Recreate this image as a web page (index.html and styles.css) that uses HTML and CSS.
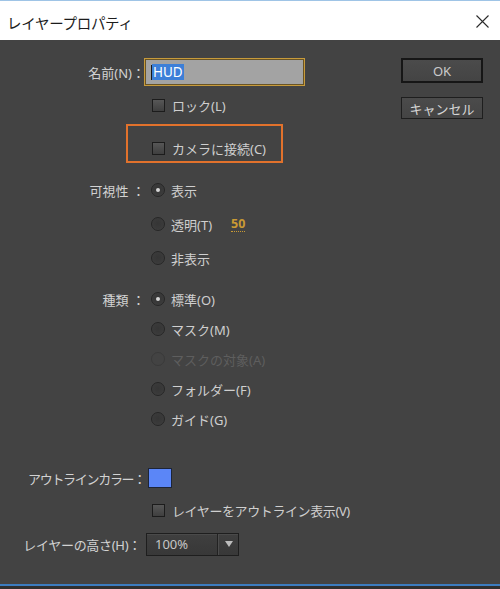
FILE: index.html
```html
<!DOCTYPE html>
<html lang="ja">
<head>
<meta charset="utf-8">
<title>レイヤープロパティ</title>
<link rel="stylesheet" href="styles.css">
</head>
<body>
<div class="window">
  <header class="titlebar">
    <span class="title">レイヤープロパティ</span>
    <svg class="close" width="13" height="13" viewBox="0 0 13 13"><path d="M0.5 0.5L12.5 12.5M12.5 0.5L0.5 12.5" stroke="#2b2b2b" stroke-width="1.1" fill="none"/></svg>
  </header>
  <main class="dialog">
    <div class="form">
      <div class="row row-name">
        <span class="label">名前(N)：</span>
        <div class="field"><span class="caret"></span><span class="sel">HUD</span></div>
      </div>
      <div class="row row-lock indent">
        <span class="check"></span><span class="text ctext">ロック(L)</span>
      </div>
      <div class="highlight">
        <div class="row row-cam"><span class="check"></span><span class="text ctext">カメラに接続(C)</span></div>
      </div>
      <div class="group group-vis">
        <div class="row vis">
          <span class="label">可視性 ：</span>
          <span class="radio on"></span><span class="text">表示</span>
        </div>
        <div class="row vis indent">
          <span class="radio"></span><span class="text">透明(T)</span><span class="num">50</span>
        </div>
        <div class="row vis indent">
          <span class="radio"></span><span class="text">非表示</span>
        </div>
      </div>
      <div class="group group-type">
        <div class="row type">
          <span class="label">種類 ：</span>
          <span class="radio on"></span><span class="text">標準(O)</span>
        </div>
        <div class="row type indent">
          <span class="radio"></span><span class="text">マスク(M)</span>
        </div>
        <div class="row type indent disabled">
          <span class="radio"></span><span class="text">マスクの対象(A)</span>
        </div>
        <div class="row type indent">
          <span class="radio"></span><span class="text">フォルダー(F)</span>
        </div>
        <div class="row type indent">
          <span class="radio"></span><span class="text">ガイド(G)</span>
        </div>
      </div>
      <div class="row row-color">
        <span class="label narrow">アウトラインカラー：</span>
        <span class="swatch"></span>
      </div>
      <div class="row row-outline indent">
        <span class="check"></span><span class="text ctext tight">レイヤーをアウトライン表示(V)</span>
      </div>
      <div class="row row-height">
        <span class="label semi">レイヤーの高さ(H)：</span>
        <div class="dropdown">
          <span class="dd-value">100%</span>
          <span class="dd-arrow"><svg width="8" height="6" viewBox="0 0 8 6"><path d="M0 0H8L4 6Z" fill="#bdbdbd"/></svg></span>
        </div>
      </div>
    </div>
    <div class="buttons">
      <button class="btn btn-ok">OK</button>
      <button class="btn btn-cancel">キャンセル</button>
    </div>
  </main>
</div>
</body>
</html>
```

FILE: styles.css
```css
* { box-sizing: border-box; }
html { background: #2f2f2f; }
body {
  margin: 0;
  font-family: "Noto Sans", "Noto Sans CJK JP", sans-serif;
  font-size: 13px;
  color: #cfcfcf;
}
.window { width: 500px; }

.titlebar {
  height: 40px;
  background: #ffffff;
  border-top: 1px solid #9fc4e6;
  display: flex;
  align-items: center;
  justify-content: space-between;
  padding: 3px 11px 0 7px;
}
.title {
  font-family: "Noto Sans CJK JP", sans-serif;
  font-size: 14.5px;
  color: #1c1c1c;
  letter-spacing: -0.3px;
}
.close { margin-top: -2px; }

.dialog {
  height: 546px;
  background: #434343;
  border-bottom: 2px solid #3c7cbf;
  display: flex;
}
.form { width: 401px; padding-top: 18px; }

.row { display: flex; align-items: center; height: 24px; }
.indent { padding-left: 145px; }
.label {
  width: 145px;
  flex: none;
  text-align: right;
  color: #d2d2d2;
  white-space: nowrap;
}
.label.narrow { letter-spacing: -1.3px; }
.label.semi { letter-spacing: -0.3px; }
.text { margin-left: 6px; white-space: nowrap; }
.ctext { margin-left: 7px; }
.tight { letter-spacing: -0.4px; }

.row-name { height: 28px; }
.field {
  width: 161px;
  height: 28px;
  margin-left: -1px;
  background: #a3a3a3;
  border: 1px solid #c79b3c;
  box-shadow: inset 0 0 0 1px #6a5424;
  display: flex;
  align-items: center;
  padding-left: 6px;
}
.caret { width: 1px; height: 15px; background: #1a1a1a; }
.sel {
  background: #3c7fd8;
  color: #ffffff;
  padding: 0 1px;
  line-height: 16px;
  font-size: 13.5px;
}

.row-lock { margin-top: 7px; }
.check {
  width: 13px;
  height: 13px;
  flex: none;
  margin-left: 7px;
  border: 1px solid #1c1c1c;
  background: linear-gradient(#575757, #3f3f3f);
}
.highlight {
  margin-top: 7px;
  margin-left: 126px;
  width: 157px;
  height: 39px;
  border: 2px solid #e2722c;
  padding: 10px 0 0 17px;
}

.group-vis { margin-top: 10px; }
.vis { height: 34px; }
.group-type { margin-top: 9px; }
.type { height: 30px; }

.radio {
  width: 14px;
  height: 14px;
  flex: none;
  margin-left: 6px;
  border-radius: 50%;
  border: 1px solid #262626;
  background: radial-gradient(circle at 50% 45%, #353535 0, #3a3a3a 60%, #474747 100%);
  display: flex;
  align-items: center;
  justify-content: center;
}
.radio.on::after {
  content: "";
  width: 4px;
  height: 4px;
  border-radius: 50%;
  background: #d6d6d6;
}
.disabled .radio { border-color: #3a3a3a; background: #434343; }
.disabled .text { color: #5e5e5e; }

.num {
  margin-left: 19px;
  color: #c99a34;
  font-weight: 700;
  font-size: 12.5px;
  line-height: 15px;
  border-bottom: 1px dotted #c99a34;
}

.row-color { margin-top: 32px; }
.swatch {
  width: 24px;
  height: 20px;
  margin-left: 3px;
  background: #5b86f7;
  border: 1px solid #1d2538;
}
.row-outline { margin-top: 8px; }
.row-height { margin-top: 10px; }
.row-height .label { padding-right: 4px; }
.dropdown {
  width: 93px;
  height: 23px;
  margin-left: 1px;
  display: flex;
  border: 1px solid #1e1e1e;
  background: linear-gradient(#3f3f3f, #383838);
  box-shadow: inset 0 1px 0 #4a4a4a;
}
.dd-value {
  width: 71px;
  padding-left: 8px;
  line-height: 21px;
  color: #c6c6c6;
  border-right: 1px solid #222;
}
.dd-arrow {
  flex: 1;
  display: flex;
  align-items: center;
  justify-content: center;
  border-left: 1px solid #4c4c4c;
}

.buttons {
  width: 82px;
  padding-top: 18px;
  display: flex;
  flex-direction: column;
}
.btn {
  font-family: "Noto Sans", "Noto Sans CJK JP", sans-serif;
  font-size: 13px;
  color: #cbcbcb;
  background: linear-gradient(#4b4b4b, #444444);
  padding: 0;
}
.btn-ok {
  height: 25px;
  border: 2px solid #161616;
}
.btn-cancel {
  height: 22px;
  margin-top: 14px;
  border: 1px solid #1e1e1e;
  color: #d6d6d6;
}
```
